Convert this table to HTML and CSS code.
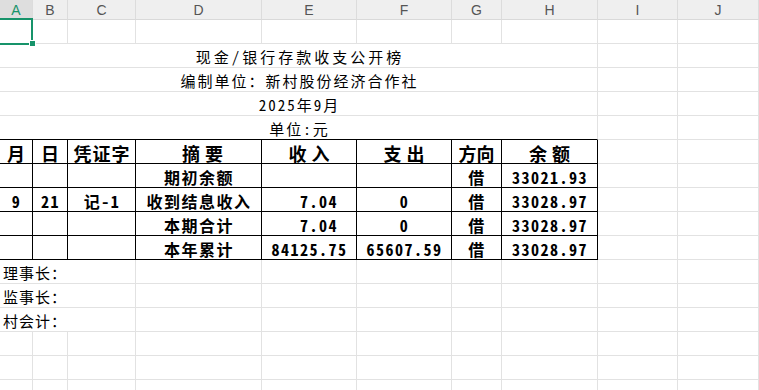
FILE: index.html
```html
<!DOCTYPE html>
<html lang="zh">
<head>
<meta charset="utf-8">
<title>现金/银行存款收支公开榜</title>
<link rel="stylesheet" href="styles.css">
</head>
<body>
<div class="sheet">
  <div class="colhead">
    <div class="ch sel">A</div><div class="ch">B</div><div class="ch">C</div><div class="ch">D</div><div class="ch">E</div><div class="ch">F</div><div class="ch">G</div><div class="ch">H</div><div class="ch">I</div><div class="ch">J</div>
  </div>
  <div class="grid">
    <div class="cell active"></div><div class="cell"></div><div class="cell"></div><div class="cell"></div><div class="cell"></div><div class="cell"></div><div class="cell"></div><div class="cell"></div><div class="cell"></div><div class="cell"></div>

    <div class="cell merge txt title">现金/银行存款收支公开榜</div><div class="cell"></div><div class="cell"></div>
    <div class="cell merge txt">编制单位：新村股份经济合作社</div><div class="cell"></div><div class="cell"></div>
    <div class="cell merge txt">2025年9月</div><div class="cell"></div><div class="cell"></div>
    <div class="cell merge txt above">单位:元</div><div class="cell"></div><div class="cell"></div>

    <div class="cell t th">月</div><div class="cell t th">日</div><div class="cell t th">凭证字</div><div class="cell t th wide shift">摘要</div><div class="cell t th wide">收入</div><div class="cell t th wide">支出</div><div class="cell t th tight">方向</div><div class="cell t th wide">余额</div><div class="cell"></div><div class="cell"></div>

    <div class="cell t"></div><div class="cell t"></div><div class="cell t"></div><div class="cell t">期初余额</div><div class="cell t"></div><div class="cell t"></div><div class="cell t">借</div><div class="cell t">33021.93</div><div class="cell"></div><div class="cell"></div>

    <div class="cell t">9</div><div class="cell t">21</div><div class="cell t">记-1</div><div class="cell t">收到结息收入</div><div class="cell t">  7.04</div><div class="cell t">0</div><div class="cell t">借</div><div class="cell t">33028.97</div><div class="cell"></div><div class="cell"></div>

    <div class="cell t"></div><div class="cell t"></div><div class="cell t"></div><div class="cell t">本期合计</div><div class="cell t">  7.04</div><div class="cell t">0</div><div class="cell t">借</div><div class="cell t">33028.97</div><div class="cell"></div><div class="cell"></div>

    <div class="cell t"></div><div class="cell t"></div><div class="cell t"></div><div class="cell t">本年累计</div><div class="cell t">84125.75</div><div class="cell t">65607.59</div><div class="cell t">借</div><div class="cell t">33028.97</div><div class="cell"></div><div class="cell"></div>

    <div class="cell span3 label">理事长：</div><div class="cell"></div><div class="cell"></div><div class="cell"></div><div class="cell"></div><div class="cell"></div><div class="cell"></div><div class="cell"></div>
    <div class="cell span3 label">监事长：</div><div class="cell"></div><div class="cell"></div><div class="cell"></div><div class="cell"></div><div class="cell"></div><div class="cell"></div><div class="cell"></div>
    <div class="cell span3 label">村会计：</div><div class="cell"></div><div class="cell"></div><div class="cell"></div><div class="cell"></div><div class="cell"></div><div class="cell"></div><div class="cell"></div>

    <div class="cell"></div><div class="cell"></div><div class="cell"></div><div class="cell"></div><div class="cell"></div><div class="cell"></div><div class="cell"></div><div class="cell"></div><div class="cell"></div><div class="cell"></div>
    <div class="cell"></div><div class="cell"></div><div class="cell"></div><div class="cell"></div><div class="cell"></div><div class="cell"></div><div class="cell"></div><div class="cell"></div><div class="cell"></div><div class="cell"></div>
    <div class="cell"></div><div class="cell"></div><div class="cell"></div><div class="cell"></div><div class="cell"></div><div class="cell"></div><div class="cell"></div><div class="cell"></div><div class="cell"></div><div class="cell"></div>
  </div>
</div>
</body>
</html>
```
FILE: styles.css
```css
html, body {
  margin: 0;
  padding: 0;
  background: #ffffff;
  overflow: hidden;
}

.sheet {
  width: 759px;
  height: 390px;
  overflow: hidden;
  font-family: "Noto Sans Mono CJK SC", "Noto Sans CJK SC", sans-serif;
  color: #000;
}

.colhead,
.grid {
  display: grid;
  grid-template-columns: 33px 35px 68px 126px 95px 95px 50px 96px 80px 81px;
}

.colhead {
  height: 20px;
  background: #efefef;
}

.ch {
  box-sizing: border-box;
  border-right: 1px solid #dcdcdc;
  border-bottom: 1px solid #d9d9d9;
  display: flex;
  align-items: center;
  justify-content: center;
  font-family: "Liberation Sans", Arial, sans-serif;
  font-size: 14px;
  color: #555;
}

.ch.sel {
  background: #dedede;
  color: #17936a;
}

.grid {
  grid-auto-rows: 24px;
}

.cell {
  box-sizing: border-box;
  border-right: 1px solid #e2e2e2;
  border-bottom: 1px solid #e2e2e2;
  display: flex;
  align-items: center;
  justify-content: center;
  white-space: pre;
  overflow: hidden;
  font-size: 16px;
}

.cell.active {
  position: relative;
  overflow: visible;
}

.cell.active::before {
  content: "";
  position: absolute;
  left: -2px;
  top: -2px;
  right: -1px;
  bottom: -2px;
  border: 2px solid #17936a;
}

.cell.active::after {
  content: "";
  position: absolute;
  right: -4px;
  bottom: -4px;
  width: 5px;
  height: 5px;
  background: #17936a;
  border: 1px solid #fff;
  z-index: 2;
}

.merge {
  grid-column: 1 / 9;
}

.txt {
  font-size: 15px;
  letter-spacing: 2px;
  padding-top: 2px;
  padding-left: 2px;
}

.txt.title {
  letter-spacing: 3px;
  padding-left: 3px;
}

.above {
  border-bottom-color: #000;
}

.t {
  border-right-color: #000;
  border-bottom-color: #000;
  font-weight: 700;
  letter-spacing: 1.5px;
  padding-top: 2px;
  padding-left: 1px;
}

.th {
  font-size: 18px;
  letter-spacing: 1px;
  padding-left: 1px;
}

.th.wide {
  letter-spacing: 5px;
  padding-left: 5px;
}

.th.tight {
  letter-spacing: 0;
  padding-left: 0;
}

.th.shift {
  padding-left: 13px;
}

.span3 {
  grid-column: 1 / 4;
}

.label {
  justify-content: flex-start;
  padding-left: 3px;
  font-size: 15px;
  letter-spacing: 1px;
  padding-top: 2px;
}
```
